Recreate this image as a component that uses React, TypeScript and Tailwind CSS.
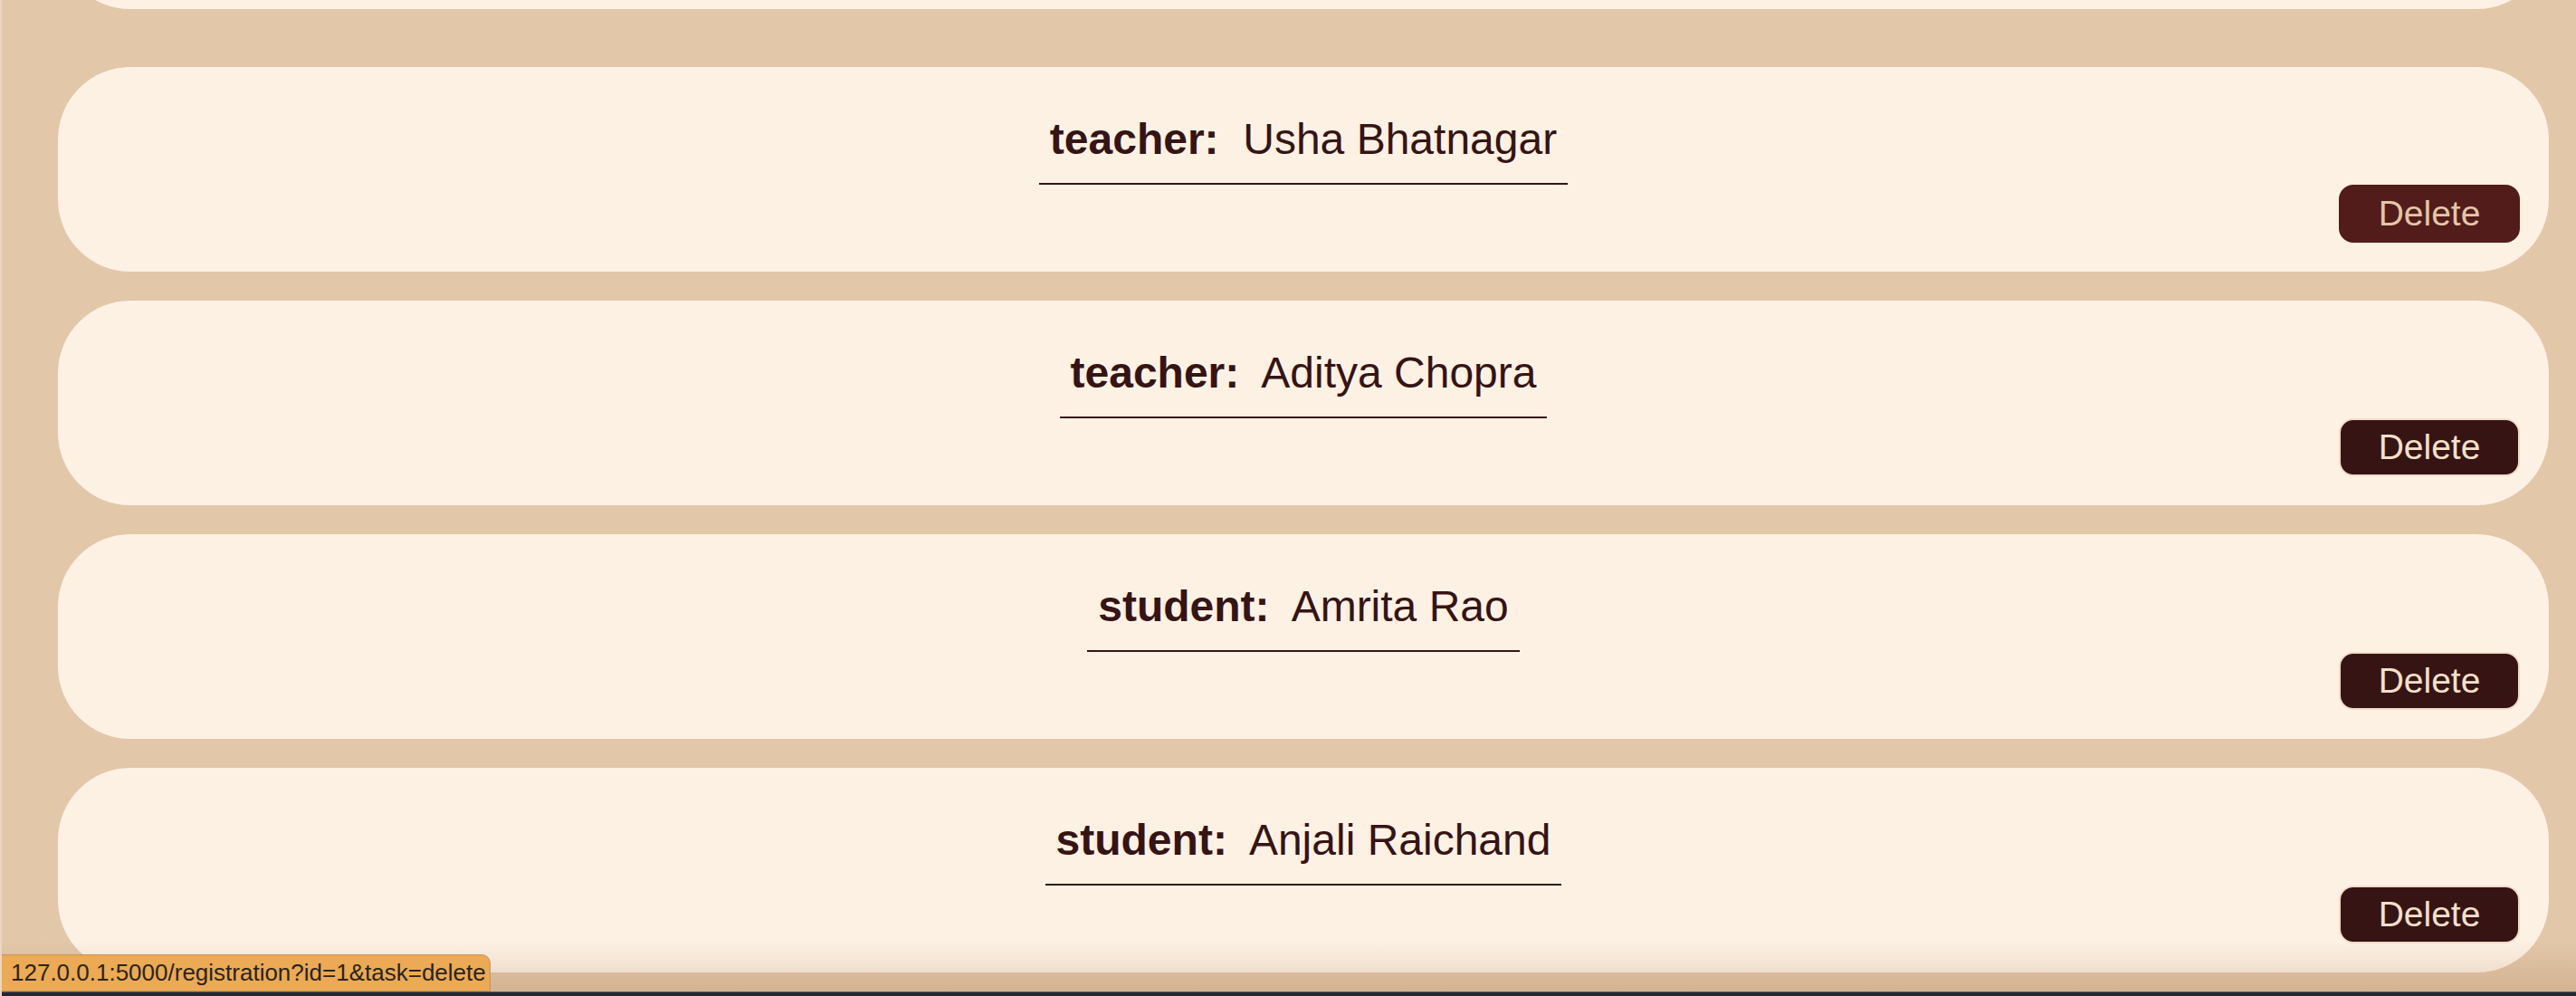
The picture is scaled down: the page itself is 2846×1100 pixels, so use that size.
import React from "react";

type Person = { role: string; name: string; id: number };

const people: Person[] = [
  { id: 1, role: "teacher", name: "Usha Bhatnagar" },
  { id: 2, role: "teacher", name: "Aditya Chopra" },
  { id: 3, role: "student", name: "Amrita Rao" },
  { id: 4, role: "student", name: "Anjali Raichand" },
];

function RecordCard({ person, hovered }: { person: Person; hovered?: boolean }) {
  return (
    <div className="flex h-[226px] flex-col rounded-[80px] bg-[#fdf1e4] px-8 pt-[52px] pb-8">
      <div className="text-center">
        <h2 className="inline-block border-b-2 border-[#361414] px-3 pb-[21px] text-[48px] leading-[55px] text-[#361414]">
          <span className="font-bold">{person.role}:</span>&nbsp; {person.name}
        </h2>
      </div>
      <div className="flex justify-end">
        <a
          href={`/registration?id=${person.id}&task=delete`}
          className={
            hovered
              ? "flex h-[64px] w-[200px] items-center justify-center rounded-[16px] border-2 border-[#521c1a] bg-[#521c1a] text-[39px] text-[#e2c6a8]"
              : "flex h-[64px] w-[200px] items-center justify-center rounded-[16px] border-2 border-[#f0dcc6] bg-[#361414] text-[39px] text-[#f4e0ca]"
          }
        >
          Delete
        </a>
      </div>
    </div>
  );
}

export default function App() {
  return (
    <div
      className="relative h-[1100px] w-[2846px] overflow-hidden border-l-2 border-[#ead6c1] bg-[#e2c7a9]"
      style={{ fontFamily: '"Liberation Sans", Arial, sans-serif' }}
    >
      <div className="flex flex-col gap-8 pl-[62px] pr-[30px]">
        <div className="-mt-[216px] mb-8 h-[226px] rounded-[80px] bg-[#fdf1e4]" />
        {people.map((p, i) => (
          <RecordCard key={p.id} person={p} hovered={i === 0} />
        ))}
      </div>

      {/* bottom fade from the browser window */}
      <div className="pointer-events-none absolute right-0 bottom-[5px] left-0 h-[56px] bg-linear-to-b from-transparent to-[#a8784a]/25" />

      {/* link preview in status bar */}
      <div className="absolute bottom-[5px] left-0 flex h-[41px] w-[540px] items-center rounded-tr-[10px] border border-l-0 border-[#c9925a] bg-[#ebaa53] pl-[10px] text-[26px] text-[#2a2420]">
        127.0.0.1:5000/registration?id=1&amp;task=delete
      </div>

      <div className="absolute right-0 bottom-0 left-0 h-[5px] border-t border-[#5b5d63] bg-[#222833]" />
    </div>
  );
}
